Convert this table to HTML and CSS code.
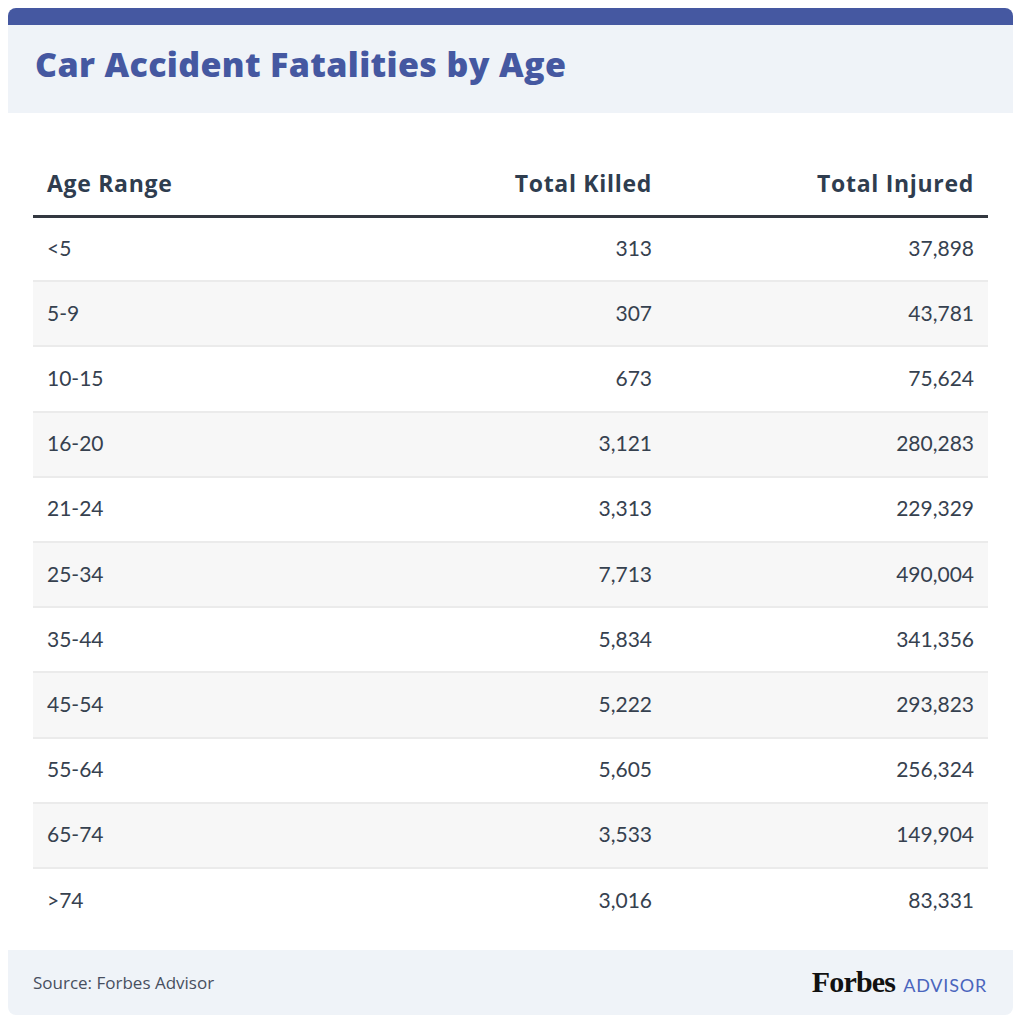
FILE: index.html
```html
<!DOCTYPE html>
<html lang="en">
<head>
<meta charset="utf-8">
<title>Car Accident Fatalities by Age</title>
<link rel="stylesheet" href="styles.css">
</head>
<body>
<div class="card">
  <div class="topbar"></div>
  <div class="header">
    <h1 class="title">Car Accident Fatalities by Age</h1>
  </div>
  <div class="table-wrap">
    <table class="data">
      <colgroup>
        <col class="c-age">
        <col class="c-killed">
        <col class="c-injured">
      </colgroup>
      <thead>
        <tr>
          <th>Age Range</th>
          <th class="col-num">Total Killed</th>
          <th class="col-num">Total Injured</th>
        </tr>
      </thead>
      <tbody>
        <tr><td>&lt;5</td><td class="num">313</td><td class="num">37,898</td></tr>
        <tr><td>5-9</td><td class="num">307</td><td class="num">43,781</td></tr>
        <tr><td>10-15</td><td class="num">673</td><td class="num">75,624</td></tr>
        <tr><td>16-20</td><td class="num">3,121</td><td class="num">280,283</td></tr>
        <tr><td>21-24</td><td class="num">3,313</td><td class="num">229,329</td></tr>
        <tr><td>25-34</td><td class="num">7,713</td><td class="num">490,004</td></tr>
        <tr><td>35-44</td><td class="num">5,834</td><td class="num">341,356</td></tr>
        <tr><td>45-54</td><td class="num">5,222</td><td class="num">293,823</td></tr>
        <tr><td>55-64</td><td class="num">5,605</td><td class="num">256,324</td></tr>
        <tr><td>65-74</td><td class="num">3,533</td><td class="num">149,904</td></tr>
        <tr><td>&gt;74</td><td class="num">3,016</td><td class="num">83,331</td></tr>
      </tbody>
    </table>
  </div>
  <div class="footer">
    <span class="source">Source: Forbes Advisor</span>
    <span class="brand"><span class="forbes">Forbes</span><span class="advisor">ADVISOR</span></span>
  </div>
</div>
</body>
</html>
```

FILE: styles.css
```css
* { box-sizing: border-box; }
html, body { margin: 0; padding: 0; background: #ffffff; }
body { font-family: Lato, "Noto Sans", sans-serif; color: #2f3d4f; }

.card {
  margin: 8px;
  width: 1005px;
}

.topbar {
  height: 17px;
  background: #4558a1;
  border-radius: 8px 8px 0 0;
}

.header {
  height: 88px;
  background: #eff3f8;
  padding: 19px 0 0 27px;
}

.title {
  margin: 0;
  font-family: "Open Sans", sans-serif;
  font-size: 34px;
  line-height: 40px;
  font-weight: 800;
  color: #4558a1;
  letter-spacing: 0.35px;
}

.table-wrap {
  padding: 0 25px;
}

.data {
  width: 100%;
  table-layout: fixed;
  border-collapse: collapse;
  font-size: 21px;
}

.c-age { width: 340px; }
.c-killed { width: 293px; }
.c-injured { width: 322px; }

.data th {
  height: 103px;
  padding: 54px 14px 0;
  font-family: "Open Sans", sans-serif;
  font-size: 23px;
  font-weight: 700;
  letter-spacing: 0.7px;
  text-align: left;
  color: #2f3d4f;
  border-bottom: 3px solid #333840;
  vertical-align: top;
  line-height: 32px;
  white-space: nowrap;
}

.data th.col-num { text-align: right; }

.data td {
  height: 65.2px;
  padding: 0 14px 3px;
  border-bottom: 2px solid #ebebeb;
  vertical-align: middle;
  font-weight: 400;
  color: #36414f;
}

.data td.num { text-align: right; }

.data tbody tr:nth-child(even) td { background: #f7f7f7; }
.data tbody tr:last-child td { border-bottom: none; }

.footer {
  margin-top: 17px;
  height: 65px;
  background: #eff3f8;
  border-radius: 0 0 8px 8px;
  padding: 0 26px 0 25px;
  display: flex;
  align-items: center;
  justify-content: space-between;
}

.source {
  font-family: "Open Sans", sans-serif;
  font-size: 17px;
  color: #474f5f;
}

.brand {
  display: flex;
  align-items: baseline;
  gap: 8px;
  padding-bottom: 2px;
}

.forbes {
  font-family: "Liberation Serif", serif;
  font-weight: 700;
  font-size: 30px;
  color: #111111;
  letter-spacing: -0.8px;
}

.advisor {
  font-family: Lato, sans-serif;
  font-size: 18px;
  color: #4a65bd;
  letter-spacing: 0.8px;
}
```
